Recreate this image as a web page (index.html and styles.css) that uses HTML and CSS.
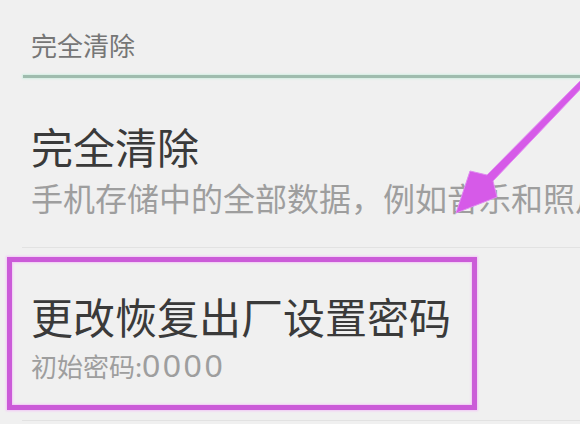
FILE: index.html
```html
<!DOCTYPE html>
<html lang="zh-CN">
<head>
<meta charset="utf-8">
<link rel="stylesheet" href="styles.css">
</head>
<body>
<div class="screen">
  <div class="cat">完全清除</div>
  <div class="cat-line"></div>
  <div class="item item-first">
    <div class="title">完全清除</div>
    <div class="sub sub-big">手机存储中的全部数据，例如音乐和照片</div>
  </div>
  <div class="sep"></div>
  <div class="item item-second">
    <div class="title">更改恢复出厂设置密码</div>
    <div class="sub sub-small">初始密码:<span class="digits">0000</span></div>
  </div>
  <div class="sep"></div>
  <div class="mark-box"></div>
  <svg class="arrow" width="580" height="424" viewBox="0 0 580 424">
    <polygon points="592,77 493,181 497,197 456,213 470,171 487,175 588,73" fill="#d65ae8" stroke="#e08bf0" stroke-width="1" stroke-linejoin="round"/>
  </svg>
</div>
</body>
</html>
```

FILE: styles.css
```css
html, body {
  margin: 0;
  padding: 0;
  background: #f0f0f0;
}
.screen {
  position: relative;
  width: 580px;
  height: 424px;
  overflow: hidden;
  background: #f0f0f0;
  font-family: "Noto Sans CJK SC", "Noto Sans", sans-serif;
}
.cat {
  padding: 32px 0 0 31px;
  font-size: 26px;
  line-height: 26px;
  height: 26px;
  color: #767676;
}
.cat-line {
  margin: 17px 0 0 23px;
  height: 3px;
  background: #9fbcae;
  box-shadow: 0 0 2px 1px #d2efe3;
}
.item {
  padding-left: 31px;
  white-space: nowrap;
  overflow: hidden;
}
.item-first {
  padding-top: 47px;
  padding-bottom: 34px;
}
.item-second {
  padding-top: 47px;
  padding-bottom: 41px;
}
.title {
  font-size: 42px;
  line-height: 42px;
  height: 42px;
  color: #3a3a3a;
}
.sub {
  color: #9e9e9e;
}
.sub-big {
  margin-top: 14px;
  font-size: 32px;
  line-height: 32px;
  height: 32px;
}
.sub-small {
  margin-top: 16px;
  font-size: 26px;
  line-height: 26px;
  height: 26px;
}
.digits {
  font-family: "Liberation Sans", Arial, sans-serif;
  font-size: 32px;
  letter-spacing: 3px;
}
.sep {
  margin-left: 22px;
  height: 1px;
  background: #e2e2e2;
}
.mark-box {
  position: absolute;
  left: 7px;
  top: 257px;
  width: 460px;
  height: 143px;
  border: 5px solid #cb5bd8;
  box-shadow: 0 0 2px 1px #f2c8f6, inset 0 0 2px 1px #f2c8f6;
}
.arrow {
  position: absolute;
  left: 0;
  top: 0;
}
```
